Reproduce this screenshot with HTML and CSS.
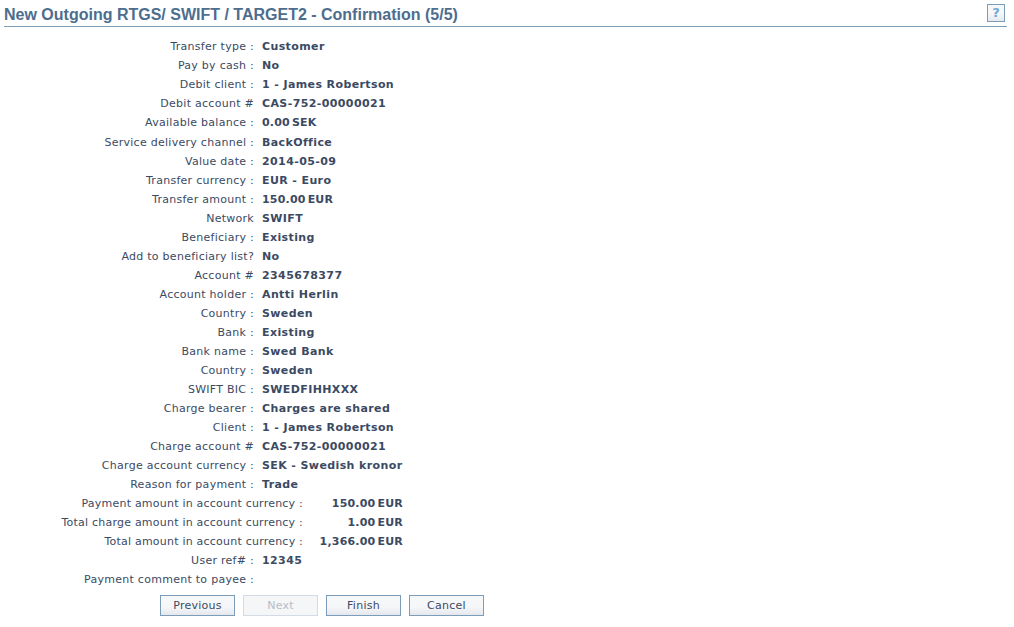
FILE: index.html
```html
<!DOCTYPE html>
<html lang="en">

<head>
    <meta charset="UTF-8">
    <title>Confirmation</title>
    <link rel="stylesheet" href="styles.css">
</head>

<body>
    <div class="header">
        <h1>New Outgoing RTGS/ SWIFT / TARGET2 - Confirmation (5/5)</h1>
        <button class="help">?</button>
    </div>

    <div class="form">
        <div class="row"><span class="label">Transfer type :</span><span class="value">Customer</span></div>
        <div class="row"><span class="label">Pay by cash :</span><span class="value">No</span></div>
        <div class="row"><span class="label">Debit client :</span><span class="value">1 - James Robertson</span></div>
        <div class="row"><span class="label">Debit account #</span><span class="value">CAS-752-00000021</span></div>
        <div class="row tall"><span class="label">Available balance :</span><span class="value money">0.00<i class="cur">SEK</i></span></div>
        <div class="row"><span class="label">Service delivery channel :</span><span class="value">BackOffice</span></div>
        <div class="row"><span class="label">Value date :</span><span class="value">2014-05-09</span></div>
        <div class="row"><span class="label">Transfer currency :</span><span class="value">EUR - Euro</span></div>
        <div class="row"><span class="label">Transfer amount :</span><span class="value money">150.00<i class="cur">EUR</i></span></div>
        <div class="row"><span class="label">Network</span><span class="value">SWIFT</span></div>
        <div class="row"><span class="label">Beneficiary :</span><span class="value">Existing</span></div>
        <div class="row"><span class="label">Add to beneficiary list?</span><span class="value">No</span></div>
        <div class="row"><span class="label">Account #</span><span class="value">2345678377</span></div>
        <div class="row"><span class="label">Account holder :</span><span class="value">Antti Herlin</span></div>
        <div class="row"><span class="label">Country :</span><span class="value">Sweden</span></div>
        <div class="row"><span class="label">Bank :</span><span class="value">Existing</span></div>
        <div class="row"><span class="label">Bank name :</span><span class="value">Swed Bank</span></div>
        <div class="row"><span class="label">Country :</span><span class="value">Sweden</span></div>
        <div class="row"><span class="label">SWIFT BIC :</span><span class="value">SWEDFIHHXXX</span></div>
        <div class="row"><span class="label">Charge bearer :</span><span class="value">Charges are shared</span></div>
        <div class="row"><span class="label">Client :</span><span class="value">1 - James Robertson</span></div>
        <div class="row"><span class="label">Charge account #</span><span class="value">CAS-752-00000021</span></div>
        <div class="row"><span class="label">Charge account currency :</span><span class="value">SEK - Swedish kronor</span></div>
        <div class="row"><span class="label">Reason for payment :</span><span class="value">Trade</span></div>
        <div class="row wide"><span class="label">Payment amount in account currency :</span><span class="value money">150.00<i class="cur">EUR</i></span></div>
        <div class="row wide"><span class="label">Total charge amount in account currency :</span><span class="value money">1.00<i class="cur">EUR</i></span></div>
        <div class="row wide"><span class="label">Total amount in account currency :</span><span class="value money">1,366.00<i class="cur">EUR</i></span></div>
        <div class="row"><span class="label">User ref# :</span><span class="value">12345</span></div>
        <div class="row"><span class="label">Payment comment to payee :</span><span class="value"></span></div>
    </div>

    <div class="buttons">
        <button class="btn">Previous</button>
        <button class="btn" disabled>Next</button>
        <button class="btn">Finish</button>
        <button class="btn">Cancel</button>
    </div>
</body>

</html>
```

FILE: styles.css
```css
* {
    box-sizing: border-box;
}

body {
    margin: 0;
    padding: 0 7px 0 4px;
    background: #fff;
    color: #3b4a63;
    font-family: "DejaVu Sans", sans-serif;
    font-size: 11px;
}

.header {
    display: flex;
    justify-content: space-between;
    height: 27px;
    padding: 4px 2px 0 0;
    border-bottom: 1px solid #7b9db9;
}

h1 {
    margin: 1px 0 0;
    color: #4d6d8e;
    font-family: "Liberation Sans", Arial, sans-serif;
    font-size: 16px;
    line-height: 20px;
    font-weight: bold;
}

.help {
    width: 18px;
    height: 18px;
    padding: 0;
    border: 1px solid #7b9db9;
    background: linear-gradient(#f6f7f9 50%, #e6eaef);
    color: #6da9d8;
    font-family: "DejaVu Sans", sans-serif;
    font-size: 13px;
    line-height: 16px;
    font-weight: bold;
}

.form {
    display: flex;
    flex-direction: column;
    padding-top: 10px;
}

.row {
    display: flex;
    height: 19px;
    align-items: center;
}

.row.tall {
    height: 20px;
    padding-bottom: 1px;
}

.label {
    width: 250px;
    text-align: right;
    white-space: nowrap;
    letter-spacing: 0.27px;
}

.value {
    margin-left: 8px;
    font-weight: bold;
    white-space: nowrap;
    letter-spacing: 0.39px;
}

.money {
    letter-spacing: 0.2px;
}

.cur {
    margin-left: 2px;
    font-style: normal;
}

.wide .label {
    width: 299px;
    letter-spacing: 0.22px;
}

.wide .value {
    width: 100px;
    text-align: right;
    margin-left: 0;
}

.buttons {
    display: flex;
    gap: 8px;
    padding: 6px 0 0 156px;
}

.btn {
    width: 75px;
    height: 21px;
    padding: 0;
    border: 1px solid #7b9db9;
    background: linear-gradient(#f6f7f9 55%, #e4e8ee);
    color: #3b4a63;
    font-family: "DejaVu Sans", sans-serif;
    font-size: 11px;
    letter-spacing: 0.27px;
}

.btn:disabled {
    border-color: #d3dce5;
    background: #f5f6f8;
    color: #b4bcc6;
}
```
